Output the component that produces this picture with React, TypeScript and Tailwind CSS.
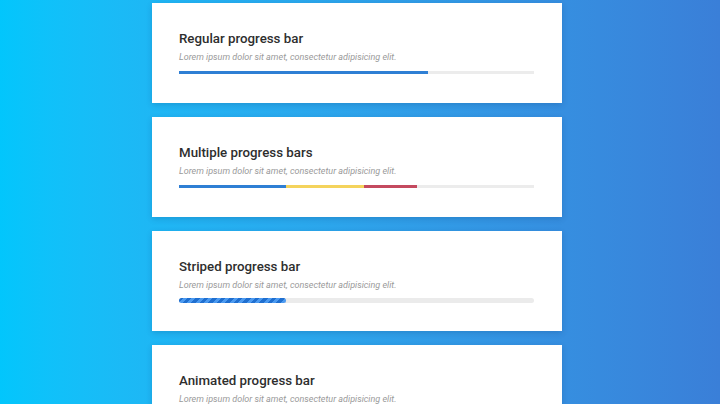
import React from "react";

type Segment = { pct: number; color: string };

const Card = ({
  title,
  children,
}: {
  title: string;
  children?: React.ReactNode;
}) => (
  <div className="h-[100px] w-[410px] shrink-0 bg-white shadow-[0_2px_6px_rgba(0,40,90,0.18)] pl-[27px] pr-[28px] pt-[28px]">
    <h2 className="text-[13.3px] leading-[16px] font-medium text-[#2e2e2e]">{title}</h2>
    <p className="mt-[5px] text-[9px] leading-[11px] italic text-[#9a9a9a]">
      Lorem ipsum dolor sit amet, consectetur adipisicing elit.
    </p>
    {children}
  </div>
);

const Track = ({ segments }: { segments: Segment[] }) => (
  <div className="mt-[8px] flex h-[3px] w-full bg-[#ececec]">
    {segments.map((s, i) => (
      <div key={i} style={{ width: `${s.pct}%`, backgroundColor: s.color }} />
    ))}
  </div>
);

export default function App() {
  return (
    <div
      className="h-[404px] w-[720px] overflow-hidden bg-gradient-to-r from-[#02c6fc] to-[#3a7fd8] pl-[152px] pt-[3px]"
      style={{ fontFamily: "Roboto, 'Noto Sans', sans-serif" }}
    >
      <div className="flex flex-col gap-[14px]">
        <Card title="Regular progress bar">
          <Track segments={[{ pct: 70, color: "#2f7fd4" }]} />
        </Card>
        <Card title="Multiple progress bars">
          <Track
            segments={[
              { pct: 30, color: "#2f7fd4" },
              { pct: 22, color: "#f4d35c" },
              { pct: 15, color: "#c44a5f" },
            ]}
          />
        </Card>
        <Card title="Striped progress bar">
          <div className="mt-[7px] h-[5px] w-full rounded-full bg-[#ebebeb]">
            <div className="h-full w-[30%] rounded-full bg-[repeating-linear-gradient(135deg,#1f6fd0_0px,#1f6fd0_3px,#4c9af0_3px,#4c9af0_6px)]" />
          </div>
        </Card>
        <Card title="Animated progress bar">
          <Track segments={[{ pct: 45, color: "#2f7fd4" }]} />
        </Card>
      </div>
    </div>
  );
}
